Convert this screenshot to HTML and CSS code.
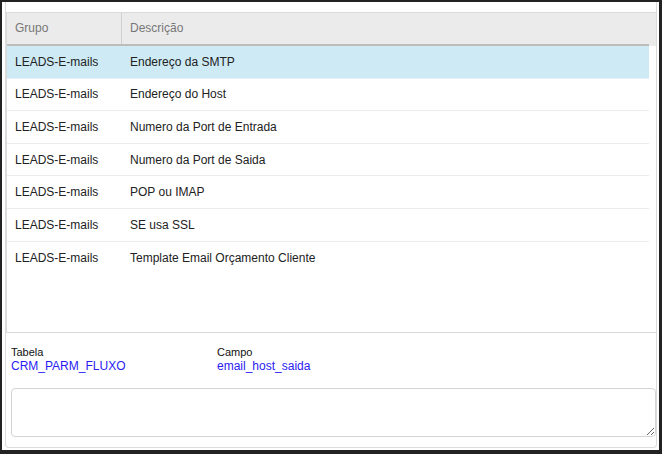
FILE: index.html
```html
<!DOCTYPE html>
<html lang="pt">
<head>
<meta charset="utf-8">
<title>Parâmetros</title>
<link rel="stylesheet" href="styles.css">
</head>
<body>
<div class="window">
  <div class="panel">
    <div class="grid">
      <div class="grid-head">
        <div class="head-row">
          <div class="cell col1 hcell">Grupo</div>
          <div class="cell col2">Descrição</div>
        </div>
      </div>
      <div class="grid-body">
        <div class="row selected"><div class="cell col1">LEADS-E-mails</div><div class="cell col2">Endereço da SMTP</div></div>
        <div class="row"><div class="cell col1">LEADS-E-mails</div><div class="cell col2">Endereço do Host</div></div>
        <div class="row"><div class="cell col1">LEADS-E-mails</div><div class="cell col2">Numero da Port de Entrada</div></div>
        <div class="row"><div class="cell col1">LEADS-E-mails</div><div class="cell col2">Numero da Port de Saida</div></div>
        <div class="row"><div class="cell col1">LEADS-E-mails</div><div class="cell col2">POP ou IMAP</div></div>
        <div class="row"><div class="cell col1">LEADS-E-mails</div><div class="cell col2">SE usa SSL</div></div>
        <div class="row last"><div class="cell col1">LEADS-E-mails</div><div class="cell col2">Template Email Orçamento Cliente</div></div>
      </div>
    </div>
    <div class="info">
      <div class="field">
        <div class="label">Tabela</div>
        <div class="value">CRM_PARM_FLUXO</div>
      </div>
      <div class="field">
        <div class="label">Campo</div>
        <div class="value">email_host_saida</div>
      </div>
    </div>
    <textarea class="memo"></textarea>
  </div>
</div>
</body>
</html>
```
FILE: styles.css
```css
* { box-sizing: border-box; }
html, body { margin: 0; padding: 0; }
body {
  background: #222;
  font-family: "Liberation Sans", Arial, sans-serif;
  width: 662px;
  height: 454px;
  overflow: hidden;
}
.window {
  margin: 2px 3px 0 2px;
  height: 448px;
  background: #fff;
  padding: 0 2px 2px 3px;
}
.panel {
  height: 446px;
  border: 1px solid #dcdcdc;
  border-top: none;
  border-radius: 0 0 4px 4px;
  padding-top: 10px;
  display: flex;
  flex-direction: column;
}
.grid {
  height: 321px;
  border: 1px solid #dadada;
  margin-right: -1px;
  display: flex;
  flex-direction: column;
}
.grid-head {
  background: #ebebeb;
  padding-right: 7px;
}
.head-row {
  display: flex;
  height: 33px;
  border-bottom: 2px solid #bdbdbd;
  color: #777;
}
.head-row .cell { line-height: 31px; padding-left: 8px; }
.hcell { border-right: 1px solid #cfcfcf; }
.grid-body {
  flex: 1;
  padding-right: 7px;
}
.row {
  display: flex;
  height: 32.6px;
  border-bottom: 1px solid #ececec;
  color: #222;
  align-items: center;
}
.row.last { border-bottom: none; }
.row.selected { background: #cdeaf5; border-bottom-color: #e8f2f6; }
.cell {
  font-size: 12px;
  padding-left: 8px;
  white-space: nowrap;
}
.col1 { width: 115px; flex: none; }
.col2 { flex: 1; }
.info {
  display: flex;
  padding: 13px 0 0 5px;
  height: 55px;
}
.field { width: 206px; }
.label {
  font-size: 11px;
  line-height: 13px;
  color: #111;
}
.value {
  font-size: 12px;
  line-height: 14px;
  color: #2a1cf2;
}
.memo {
  display: block;
  margin: 0 0 0 5px;
  width: 645px;
  height: 49px;
  border: 1px solid #d4d4d4;
  border-radius: 4px;
  resize: vertical;
  font-family: "Liberation Sans", Arial, sans-serif;
}
```
